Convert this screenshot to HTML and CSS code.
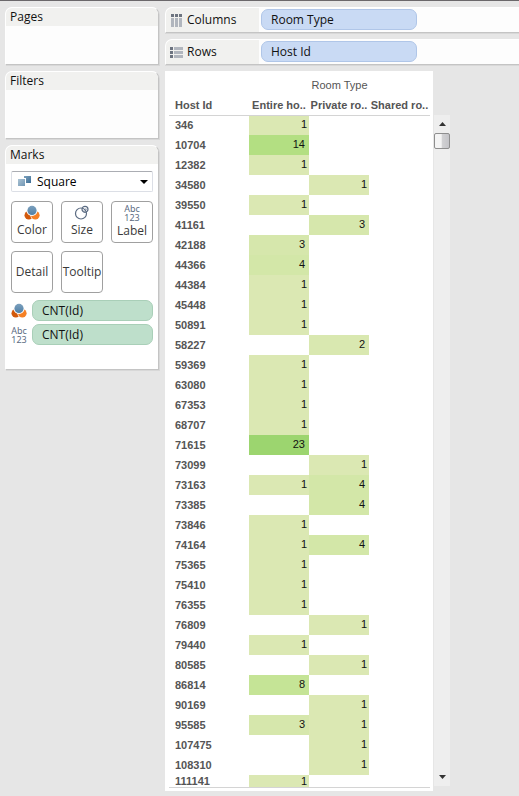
FILE: index.html
```html
<!DOCTYPE html>
<html lang="en">
<head>
<meta charset="utf-8">
<title>Host Id by Room Type</title>
<link rel="stylesheet" href="styles.css">
</head>
<body>
<svg class="defs" aria-hidden="true">
  <defs>
    <linearGradient id="blue" x1="0" y1="0" x2="0" y2="1"><stop offset="0" stop-color="#7ca0bd"/><stop offset="1" stop-color="#4f7fa6"/></linearGradient>
    <linearGradient id="pale" x1="0" y1="0" x2="1" y2="1"><stop offset="0" stop-color="#a9c2d4"/><stop offset="1" stop-color="#7297b4"/></linearGradient>
    <linearGradient id="dark" x1="0" y1="0" x2="1" y2="1"><stop offset="0" stop-color="#7da1bd"/><stop offset="1" stop-color="#3d6e96"/></linearGradient>
    <symbol id="color" viewBox="0 0 16 16">
      <circle cx="4.800" cy="10.200" r="4.300" fill="#d2590c"/>
      <circle cx="11.300" cy="10.200" r="4.900" fill="#fff"/>
      <circle cx="11.300" cy="10.200" r="4.300" fill="#f58025"/>
      <circle cx="8" cy="5.400" r="5.500" fill="#fff"/>
      <circle cx="8" cy="5.400" r="4.600" fill="url(#blue)"/>
    </symbol>
  </defs>
</svg>
<main class="app">
  <aside class="side">
    <section class="card pages"><h2>Pages</h2></section>
    <section class="card filters"><h2>Filters</h2></section>
    <section class="card marks">
      <h2>Marks</h2>
      <div class="marks-body">
        <div class="picker">
          <svg width="14" height="12" viewBox="0 0 14 12" aria-hidden="true"><path d="M6 0h7v7H6z" fill="url(#dark)"/><path d="M-1 2h9v9h-9z" fill="#fff"/><path d="M0 3h7v7H0z" fill="url(#pale)"/></svg>
          <select aria-label="Mark type"><option>Square</option></select>
          <svg class="caret" width="8" height="4" viewBox="0 0 8 4" aria-hidden="true"><path d="M0 0h8L4 4z"/></svg>
        </div>
        <div class="buttons">
          <button type="button"><svg width="16" height="16" aria-hidden="true"><use href="#color"/></svg><span>Color</span></button>
          <button type="button"><svg width="16" height="16" viewBox="0 0 16 16" fill="none" stroke="#5b6b82" stroke-width="1.200" aria-hidden="true"><circle cx="7" cy="8.500" r="5.500"/><circle cx="11" cy="4.300" r="3"/><path d="M9.500 5.500l3-2.500M9.500 7l3.500-3" stroke-width=".5"/></svg><span>Size</span></button>
          <button type="button"><span class="abc">Abc<br>123</span><span>Label</span></button>
          <button type="button"><span>Detail</span></button>
          <button type="button"><span>Tooltip</span></button>
        </div>
        <div class="encodings">
          <svg width="16" height="16" aria-hidden="true"><use href="#color"/></svg>
          <button type="button" class="pill measure">CNT(Id)</button>
          <span class="abc">Abc<br>123</span>
          <button type="button" class="pill measure">CNT(Id)</button>
        </div>
      </div>
    </section>
  </aside>
  <div class="work">
    <section class="shelf">
      <h2><svg width="13" height="13" viewBox="0 0 13 13" aria-hidden="true"><path d="M1 0h3v3H1zM5 0h3v3H5zM9 0h3v3H9z" fill="#6d7480"/><path d="M1 4h3v9H1zM5 4h3v9H5zM9 4h3v9H9z" fill="#b1b6be"/></svg>Columns</h2>
      <button type="button" class="pill dimension">Room Type</button>
    </section>
    <section class="shelf">
      <h2><svg width="13" height="13" viewBox="0 0 13 13" aria-hidden="true"><path d="M0 1h3v3H0zM0 5h3v3H0zM0 9h3v3H0z" fill="#6d7480"/><path d="M4 1h9v3H4zM4 5h9v3H4zM4 9h9v3H4z" fill="#b1b6be"/></svg>Rows</h2>
      <button type="button" class="pill dimension">Host Id</button>
    </section>
    <div class="view">
      <div class="sheet">
        <table>
          <colgroup><col class="host"><col class="kind"><col class="kind"><col></colgroup>
          <thead>
            <tr><td></td><th colspan="3" class="title">Room Type</th></tr>
            <tr><th>Host Id</th><th>Entire ho..</th><th>Private ro..</th><th>Shared ro..</th></tr>
          </thead>
          <tbody>
            <tr><th>346</th><td class="n1">1</td><td></td><td></td></tr>
            <tr><th>10704</th><td class="n14">14</td><td></td><td></td></tr>
            <tr><th>12382</th><td class="n1">1</td><td></td><td></td></tr>
            <tr><th>34580</th><td></td><td class="n1">1</td><td></td></tr>
            <tr><th>39550</th><td class="n1">1</td><td></td><td></td></tr>
            <tr><th>41161</th><td></td><td class="n3">3</td><td></td></tr>
            <tr><th>42188</th><td class="n3">3</td><td></td><td></td></tr>
            <tr><th>44366</th><td class="n4">4</td><td></td><td></td></tr>
            <tr><th>44384</th><td class="n1">1</td><td></td><td></td></tr>
            <tr><th>45448</th><td class="n1">1</td><td></td><td></td></tr>
            <tr><th>50891</th><td class="n1">1</td><td></td><td></td></tr>
            <tr><th>58227</th><td></td><td class="n2">2</td><td></td></tr>
            <tr><th>59369</th><td class="n1">1</td><td></td><td></td></tr>
            <tr><th>63080</th><td class="n1">1</td><td></td><td></td></tr>
            <tr><th>67353</th><td class="n1">1</td><td></td><td></td></tr>
            <tr><th>68707</th><td class="n1">1</td><td></td><td></td></tr>
            <tr><th>71615</th><td class="n23">23</td><td></td><td></td></tr>
            <tr><th>73099</th><td></td><td class="n1">1</td><td></td></tr>
            <tr><th>73163</th><td class="n1">1</td><td class="n4">4</td><td></td></tr>
            <tr><th>73385</th><td></td><td class="n4">4</td><td></td></tr>
            <tr><th>73846</th><td class="n1">1</td><td></td><td></td></tr>
            <tr><th>74164</th><td class="n1">1</td><td class="n4">4</td><td></td></tr>
            <tr><th>75365</th><td class="n1">1</td><td></td><td></td></tr>
            <tr><th>75410</th><td class="n1">1</td><td></td><td></td></tr>
            <tr><th>76355</th><td class="n1">1</td><td></td><td></td></tr>
            <tr><th>76809</th><td></td><td class="n1">1</td><td></td></tr>
            <tr><th>79440</th><td class="n1">1</td><td></td><td></td></tr>
            <tr><th>80585</th><td></td><td class="n1">1</td><td></td></tr>
            <tr><th>86814</th><td class="n8">8</td><td></td><td></td></tr>
            <tr><th>90169</th><td></td><td class="n1">1</td><td></td></tr>
            <tr><th>95585</th><td class="n3">3</td><td class="n1">1</td><td></td></tr>
            <tr><th>107475</th><td></td><td class="n1">1</td><td></td></tr>
            <tr><th>108310</th><td></td><td class="n1">1</td><td></td></tr>
            <tr class="partial"><th>111141</th><td class="n1">1</td><td></td><td></td></tr>
          </tbody>
        </table>
      </div>
      <div class="scrollbar">
        <button type="button" aria-label="Scroll up"><svg width="7" height="4" viewBox="0 0 7 4"><path d="M0 4h7L3.500 0z" fill="#333"/></svg></button>
        <div class="thumb"></div>
        <button type="button" class="down" aria-label="Scroll down"><svg width="7" height="4" viewBox="0 0 7 4"><path d="M0 0h7L3.500 4z" fill="#333"/></svg></button>
      </div>
    </div>
  </div>
</main>
</body>
</html>
```

FILE: styles.css
```css
* { box-sizing: border-box; }

body {
  margin: 0;
  min-height: 100vh;
  background: #e6e6e6;
  border-top: 1px solid #6b686b;
  color: #111;
  font: 12px/18px "Open Sans", "Noto Sans", sans-serif;
}

.defs { position: absolute; width: 0; height: 0; }

svg { flex: none; }

h2 { margin: 0; font: inherit; }

button {
  margin: 0;
  padding: 0;
  border: 0;
  background: none;
  color: inherit;
  font: inherit;
}

.app {
  display: grid;
  grid-template-columns: 154px minmax(0, 1fr);
  column-gap: 6px;
  align-items: start;
  padding: 6px 0 0 5px;
}

.side { display: flex; flex-direction: column; gap: 6px; }

.card {
  background: #fdfdfd;
  border: 1px solid #fff;
  border-right-color: #c4c4c4;
  border-bottom-color: #c4c4c4;
  border-radius: 7px 7px 0 0;
  box-shadow: 1px 1px 0 #d8d8d8;
}

.card h2 {
  padding: 0 4px;
  background: #f1f1ef;
  border-radius: 6px 6px 0 0;
}

.pages { min-height: 58px; }
.filters { min-height: 68px; }
.marks { min-height: 225px; background: #fff; }
.marks-body { padding: 7px 5px 0; }

.picker {
  display: flex;
  align-items: center;
  height: 21px;
  padding: 0 4px 0 6px;
  border: 1px solid #dcdfe6;
  border-top-color: #abadb3;
  border-radius: 2px;
}

.picker select {
  flex: 1;
  min-width: 0;
  padding: 0 5px;
  border: 0;
  appearance: none;
  background: none;
  color: #000;
  font: inherit;
}

.buttons {
  display: grid;
  grid-template-columns: repeat(3, 42px);
  justify-content: space-between;
  gap: 8px;
  margin-top: 9px;
}

.buttons button {
  display: flex;
  flex-direction: column;
  align-items: center;
  justify-content: center;
  height: 42px;
  border: 1px solid #a0a0a0;
  border-radius: 4px;
  color: #3a3a3a;
  white-space: nowrap;
}

.abc {
  color: #5b6b82;
  font-family: "Noto Sans", sans-serif;
  font-size: 9px;
  line-height: 9px;
  text-align: center;
}

.encodings {
  display: grid;
  grid-template-columns: 16px 1fr;
  gap: 3px 5px;
  align-items: center;
  margin-top: 7px;
}

.pill {
  height: 21px;
  padding: 0 9px;
  border: 1px solid;
  border-radius: 7px;
  line-height: 18px;
  text-align: left;
}

.measure { background: #bedfcb; border-color: #a9cfb8; }
.dimension { width: 156px; background: #c9daf4; border-color: #b0c6e8; }

.work { min-width: 0; }

.shelf {
  display: flex;
  height: 26px;
  margin-bottom: 6px;
  background: #fdfdfd;
  border: 1px solid #fff;
  border-bottom-color: #c4c4c4;
  border-right: 0;
  border-radius: 7px 0 0 0;
  box-shadow: 0 1px 0 #d8d8d8;
}

.shelf h2 {
  display: flex;
  align-items: center;
  gap: 4px;
  width: 93px;
  margin-right: 2px;
  padding-left: 4px;
  background: #f1f1ef;
  border-radius: 6px 0 0 0;
}

.shelf .pill { margin-top: 1px; }

.view { display: flex; align-items: stretch; gap: 1px; }

.sheet {
  padding: 4px 3px 3px 4px;
  background: #fff;
}

table {
  width: 261px;
  table-layout: fixed;
  border-collapse: separate;
  border-spacing: 0;
  border-bottom: 1px solid #d4d4d4;
  font: 11px/18px "Liberation Sans", Arial, sans-serif;
}

.host { width: 80px; }
.kind { width: 60px; }

th, td { height: 20px; padding: 0; white-space: nowrap; }
th { color: #555; }
th:first-child { padding-left: 6px; text-align: left; }
.title { font-weight: normal; }

td { padding: 0 4px 2px 0; color: #111; text-align: right; }
tbody tr:first-child > * { border-top: 1px solid #d4d4d4; line-height: 17px; }

.n1 { padding-right: 2px; background: #dbe8b3; }
.n2 { background: #d9e8b0; }
.n3 { background: #d6e7ac; }
.n4 { background: #d3e7a8; }
.n8 { background: #c5e496; }
.n14 { background: #b3df82; }
.n23 { background: #9cd56f; }

.partial > * { height: 12px; padding-bottom: 0; line-height: 12px; }

.scrollbar {
  display: flex;
  flex-direction: column;
  width: 16px;
  margin: 44px 0 5px;
  background: #eee;
}

.scrollbar button {
  display: flex;
  align-items: center;
  justify-content: center;
  height: 18px;
}

.thumb {
  height: 16px;
  border: 1px solid #8e8e8e;
  border-radius: 2px;
  background: linear-gradient(90deg, #f4f4f4 45%, #d2d2d4 50%, #c4c4c8);
}

.scrollbar .down { margin-top: auto; }
```
